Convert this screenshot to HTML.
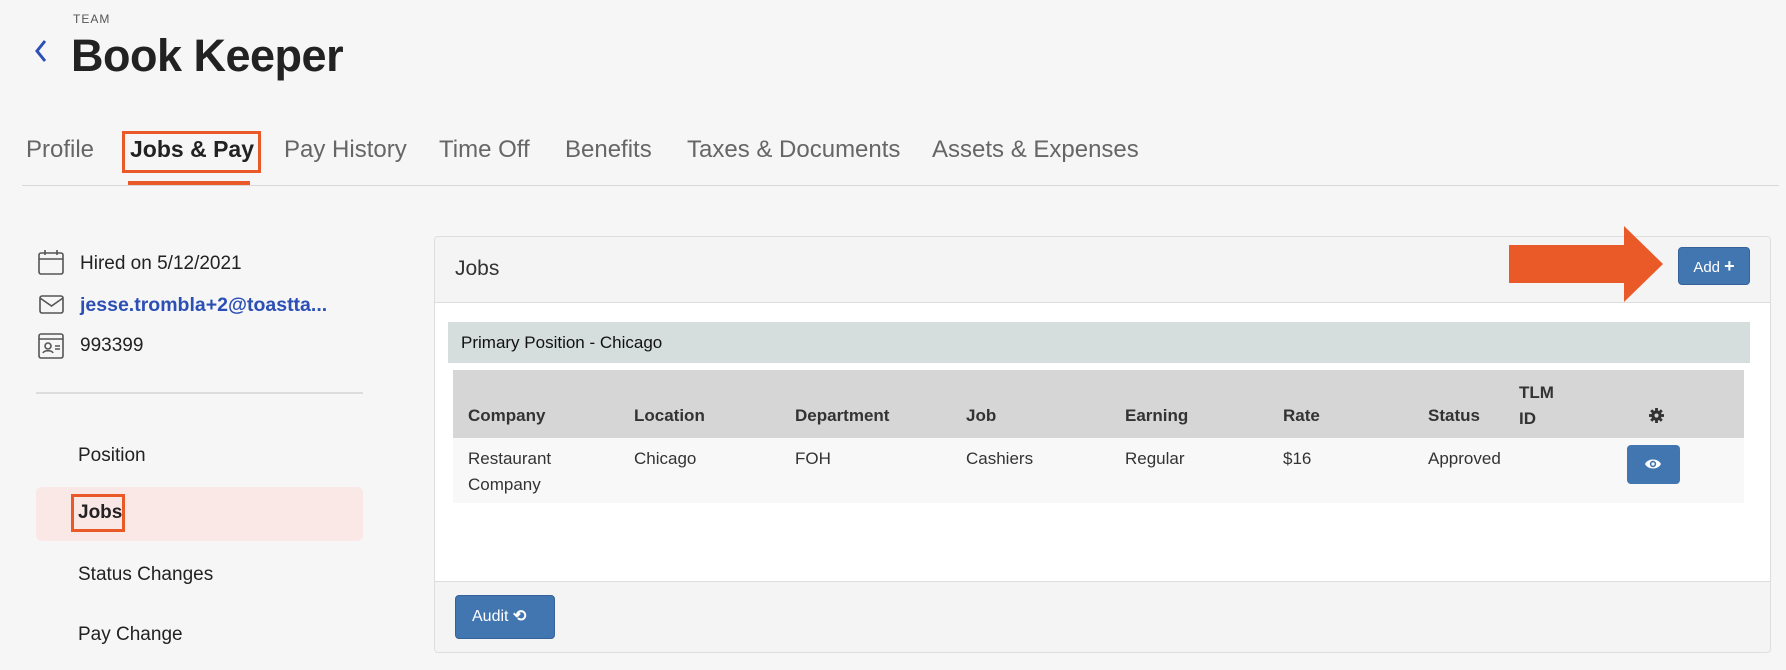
<!DOCTYPE html>
<html><head><style>
body{margin:0;width:1786px;height:670px;background:#f6f6f6;font-family:"Liberation Sans",sans-serif;position:relative;overflow:hidden;color:#222}
.a{position:absolute;white-space:nowrap}
.tab{position:absolute;top:136px;font-size:24px;color:#666}
.side{position:absolute;font-size:19px;color:#222}
.th{position:absolute;font-size:17px;font-weight:bold;color:#333}
.td{position:absolute;font-size:17px;color:#333;line-height:26px}
</style></head><body>
<div class="a" style="left:73px;top:12px;font-size:12px;letter-spacing:1px;color:#555">TEAM</div>
<svg class="a" style="left:33px;top:38px" width="16" height="26" viewBox="0 0 16 26"><path d="M12 3 L4 13 L12 23" fill="none" stroke="#2b4fb5" stroke-width="3"/></svg>
<div class="a" style="left:71px;top:30px;font-size:45px;font-weight:bold;color:#222;letter-spacing:-0.5px">Book Keeper</div>

<div class="tab" style="left:26px">Profile</div>
<div class="tab" style="left:130px;color:#222;font-weight:bold;font-size:23px;top:136px">Jobs &amp; Pay</div>
<div class="a" style="left:122px;top:131px;width:133px;height:36px;border:3px solid #ea5a28"></div>
<div class="a" style="left:128px;top:181px;width:122px;height:4px;background:#ea5a28"></div>
<div class="tab" style="left:284px">Pay History</div>
<div class="tab" style="left:439px">Time Off</div>
<div class="tab" style="left:565px">Benefits</div>
<div class="tab" style="left:687px">Taxes &amp; Documents</div>
<div class="tab" style="left:932px">Assets &amp; Expenses</div>
<div class="a" style="left:22px;top:185px;width:1757px;height:1px;background:#d8d8d8"></div>

<svg class="a" style="left:38px;top:250px" width="27" height="26" viewBox="0 0 27 26" fill="none" stroke="#555" stroke-width="1.6"><rect x="1" y="3" width="24" height="21" rx="2"/><path d="M1 9H25M7 0V5M19 0V5"/></svg>
<div class="side" style="left:80px;top:253px">Hired on 5/12/2021</div>
<svg class="a" style="left:39px;top:295px" width="25" height="19" viewBox="0 0 25 19" fill="none" stroke="#555" stroke-width="1.6"><rect x="1" y="1" width="23" height="17" rx="2"/><path d="M1 3L12.5 11L24 3"/></svg>
<div class="side" style="left:80px;top:294px;color:#2b4fb5;font-weight:bold;font-size:19.5px">jesse.trombla+2@toastta...</div>
<svg class="a" style="left:38px;top:333px" width="27" height="26" viewBox="0 0 27 26" fill="none" stroke="#555" stroke-width="1.6"><rect x="1" y="1" width="24" height="24" rx="2"/><path d="M1 6H25"/><circle cx="10" cy="13" r="3"/><path d="M5 20c1-3 9-3 10 0M17 13h5M17 16h5"/></svg>
<div class="side" style="left:80px;top:335px">993399</div>
<div class="a" style="left:36px;top:392px;width:327px;height:2px;background:#ddd"></div>
<div class="side" style="left:78px;top:445px">Position</div>
<div class="a" style="left:36px;top:487px;width:327px;height:54px;background:#fae8e6;border-radius:6px"></div>
<div class="a" style="left:71px;top:494px;width:48px;height:32px;border:3px solid #ea5a28"></div>
<div class="side" style="left:78px;top:502px;font-weight:bold">Jobs</div>
<div class="side" style="left:78px;top:564px">Status Changes</div>
<div class="side" style="left:78px;top:624px">Pay Change</div>

<div class="a" style="left:434px;top:236px;width:1335px;height:415px;background:#fff;border:1px solid #ddd;border-radius:4px;overflow:hidden">
 <div class="a" style="left:0;top:0;width:1335px;height:65px;background:#f4f4f4;border-bottom:1px solid #ddd"></div>
 <div class="a" style="left:20px;top:20px;font-size:21px;color:#333">Jobs</div>
 <div class="a" style="left:0;top:344px;width:1335px;height:71px;background:#f4f4f4;border-top:1px solid #ddd"></div>
</div>
<div class="a" style="left:1509px;top:245px;width:118px;height:38px;background:#ea5a28"></div>
<svg class="a" style="left:1624px;top:226px" width="40" height="76"><polygon points="0,0 39,38 0,76" fill="#ea5a28"/></svg>
<div class="a" style="left:1678px;top:247px;width:72px;height:38px;background:#4176b0;border:1px solid #356399;border-radius:4px;box-sizing:border-box;color:#fff;font-size:15px;text-align:center;line-height:36px">Add <b style="font-size:18px">+</b></div>

<div class="a" style="left:448px;top:322px;width:1302px;height:41px;background:#d5dedd"></div>
<div class="a" style="left:461px;top:333px;font-size:17px;color:#111">Primary Position - Chicago</div>
<div class="a" style="left:453px;top:370px;width:1291px;height:68px;background:#d6d6d6"></div>
<div class="a" style="left:453px;top:438px;width:1291px;height:65px;background:#f8f8f8"></div>
<div class="th" style="left:468px;top:406px">Company</div>
<div class="th" style="left:634px;top:406px">Location</div>
<div class="th" style="left:795px;top:406px">Department</div>
<div class="th" style="left:966px;top:406px">Job</div>
<div class="th" style="left:1125px;top:406px">Earning</div>
<div class="th" style="left:1283px;top:406px">Rate</div>
<div class="th" style="left:1428px;top:406px">Status</div>
<div class="th" style="left:1519px;top:380px;line-height:26px">TLM<br>ID</div>
<svg class="a" style="left:1649px;top:408px" width="15" height="15" viewBox="0 0 16 16"><g fill="#333"><circle cx="8" cy="8" r="5.5"/><rect x="6.5" y="0" width="3" height="16"/><rect x="0" y="6.5" width="16" height="3"/><rect x="6.5" y="0" width="3" height="16" transform="rotate(45 8 8)"/><rect x="6.5" y="0" width="3" height="16" transform="rotate(-45 8 8)"/></g><circle cx="8" cy="8" r="2.2" fill="#d6d6d6"/></svg>
<div class="td" style="left:468px;top:446px">Restaurant<br>Company</div>
<div class="td" style="left:634px;top:446px">Chicago</div>
<div class="td" style="left:795px;top:446px">FOH</div>
<div class="td" style="left:966px;top:446px">Cashiers</div>
<div class="td" style="left:1125px;top:446px">Regular</div>
<div class="td" style="left:1283px;top:446px">$16</div>
<div class="td" style="left:1428px;top:446px">Approved</div>
<div class="a" style="left:1627px;top:445px;width:53px;height:39px;background:#4176b0;border-radius:4px"></div>
<svg class="a" style="left:1644px;top:457px" width="18" height="14" viewBox="0 0 18 14"><path d="M1 7C4 1 14 1 17 7C14 13 4 13 1 7Z" fill="#fff"/><circle cx="9" cy="7" r="3.2" fill="#4176b0"/><circle cx="9" cy="7" r="1.6" fill="#fff"/></svg>

<div class="a" style="left:455px;top:595px;width:100px;height:44px;background:#4176b0;border:1px solid #356399;border-radius:4px;box-sizing:border-box;color:#fff;font-size:16px;line-height:42px;padding-left:16px">Audit <span style="font-weight:bold">⟲</span></div>
</body></html>
